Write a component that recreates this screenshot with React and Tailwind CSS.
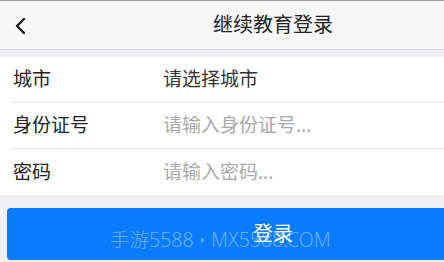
const FONT = { fontFamily: '"Noto Sans", "Noto Sans CJK SC", sans-serif' }

const ROWS = [
  { label: '城市', value: '请选择城市', placeholder: false },
  { label: '身份证号', value: '请输入身份证号...', placeholder: true },
  { label: '密码', value: '请输入密码...', placeholder: true },
]

export default function App() {
  return (
    <div className="w-[444px] h-[262px] overflow-hidden bg-[#efeff4]" style={FONT}>
      <div className="w-[546px] flex flex-col">
        <div className="h-[50px] bg-[#f7f7f7] border-t border-[#9a9a9a] border-b border-b-[#dcdce0] flex items-center relative">
          <svg className="absolute left-[14px] top-[16px]" width="14" height="18" viewBox="0 0 14 18">
            <path d="M10 2 L3 9 L10 16" fill="none" stroke="#1a1a1a" strokeWidth="2.4" strokeLinecap="round" strokeLinejoin="round" />
          </svg>
          <div className="flex-1 text-center text-[20px] text-[#222]">继续教育登录</div>
        </div>

        <div className="mt-[7px] bg-white flex flex-col">
          {ROWS.map((r, i) => (
            <div key={r.label} className="pl-[12px]">
              <div
                className={[
                  'h-[46px] flex items-center text-[19px]',
                  i < ROWS.length - 1 ? 'border-b border-[#e2e2e2]' : '',
                ].join(' ')}
              >
                <div className="w-[151px] pl-[1px] text-[#222]">{r.label}</div>
                <div className={r.placeholder ? 'text-[#a8a8a8]' : 'text-[#333]'}>{r.value}</div>
              </div>
            </div>
          ))}
        </div>

        <div className="px-[7px] pt-[13px]">
          <div className="relative h-[52px] bg-[#0a7cff] rounded-[4px] flex items-center justify-center text-white text-[20px]">
            登录
            <div className="absolute left-[103px] top-[22px] text-[19.5px] font-light text-white/40 whitespace-nowrap leading-none">
              手游5588 • MX5588.COM
            </div>
          </div>
        </div>
      </div>
    </div>
  )
}
